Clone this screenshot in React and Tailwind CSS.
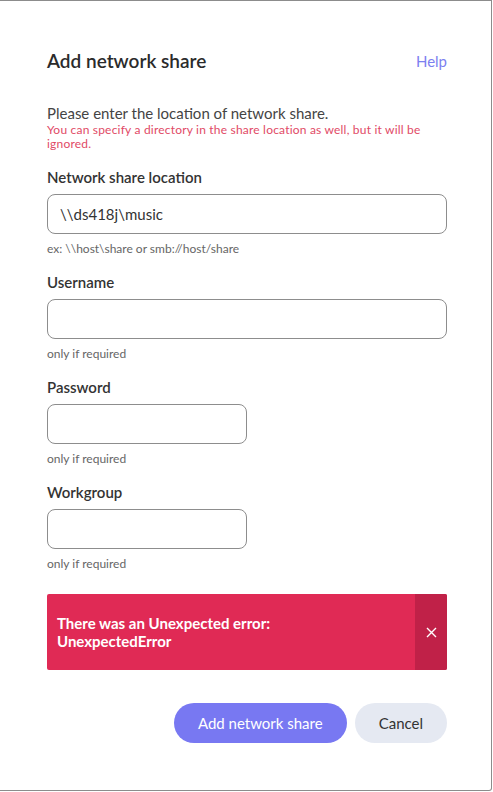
import React from "react";

const Field = ({ label, value, narrow, hint }) => (
  <div className="mt-4">
    <p className="text-[15px] leading-[20px] font-semibold text-[#333]">{label}</p>
    <div
      className={`mt-[7px] h-[40px] rounded-[8px] border border-[#8d8d8d] flex items-center px-[12px] text-[15px] text-[#333] ${
        narrow ? "w-[200px]" : "w-full"
      }`}
    >
      {value}
    </div>
    <p className="mt-2 text-[12px] leading-[14px] text-[#666]">{hint}</p>
  </div>
);

export default function App() {
  return (
    <div
      className="w-[492px] h-[791px] bg-white border-t border-r border-b border-[#8c8c8c] rounded-br-[3px] pl-[47px] pr-[44px] pt-[48px]"
      style={{ fontFamily: "Lato, 'Noto Sans', sans-serif" }}
    >
      <div className="flex justify-between items-center h-[24px]">
        <h1 className="text-[19px] font-semibold text-[#2b2b2b]">Add network share</h1>
        <a className="text-[15px] text-[#7c7ff0]">Help</a>
      </div>

      <p className="mt-[30px] text-[15px] leading-[20px] text-[#444]">
        Please enter the location of network share.
      </p>
      <p className="text-[12px] leading-[14px] tracking-[0.2px] text-[#e14a66]">
        You can specify a directory in the share location as well, but it will be ignored.
      </p>

      <Field label="Network share location" value="\\ds418j\music" hint="ex: \\host\share or smb://host/share" />
      <Field label="Username" value="" hint="only if required" />
      <Field label="Password" value="" narrow hint="only if required" />
      <Field label="Workgroup" value="" narrow hint="only if required" />

      <div className="mt-[23px] h-[76px] flex bg-[#e02a55] rounded-[2px] overflow-hidden">
        <div className="flex-1 flex items-center pl-[10px] text-white font-bold text-[15px] leading-[18px]">
          There was an Unexpected error:
          <br />
          UnexpectedError
        </div>
        <div className="w-[32px] bg-[#c02148] flex items-center justify-center">
          <svg width="11" height="11" viewBox="0 0 11 11" stroke="white" strokeWidth="1.4">
            <path d="M1 1L10 10M10 1L1 10" />
          </svg>
        </div>
      </div>

      <div className="mt-[33px] flex justify-end gap-2">
        <button className="h-[40px] px-6 rounded-full bg-[#7878f2] text-white text-[15px]">
          Add network share
        </button>
        <button className="h-[40px] px-6 rounded-full bg-[#e5e9f2] text-[#333] text-[15px]">
          Cancel
        </button>
      </div>
    </div>
  );
}
